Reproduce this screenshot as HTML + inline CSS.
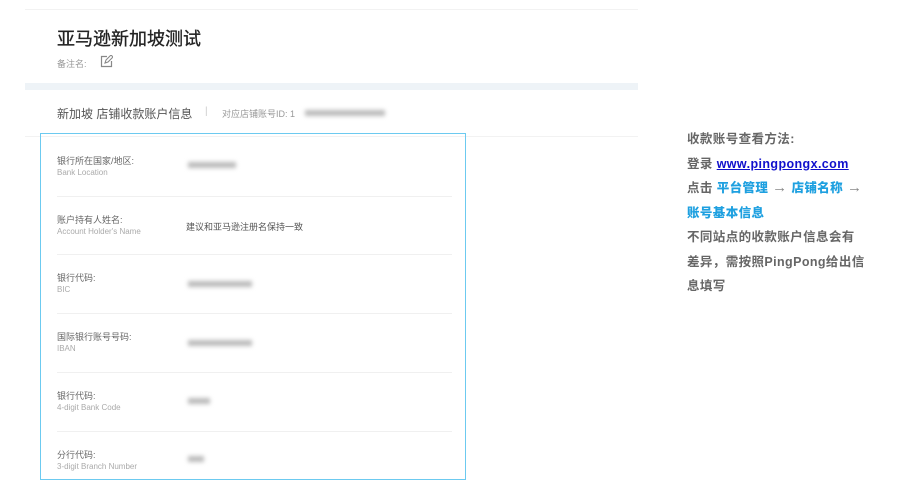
<!DOCTYPE html>
<html><head><meta charset="utf-8"><style>
body{margin:0;width:922px;height:489px;background:#fff;position:relative;overflow:hidden;font-family:"Liberation Sans","Noto Sans CJK SC",sans-serif;}
.a{position:absolute;}
.lab{position:absolute;left:57px;font-size:9px;color:#666;line-height:12px;}
.lab span{display:block;color:#aaa;font-size:8px;}
.bl{position:absolute;background:#bbb;filter:blur(2px);height:6px;}
.sep{position:absolute;left:57px;width:395px;height:1px;background:#f0f0f0;}
.r{position:absolute;left:687px;font-size:12.5px;color:#666;font-weight:bold;line-height:24.5px;letter-spacing:0.4px;}
.r b{color:#1ea0e0;}
.r i{font-style:normal;font-size:15px;color:#888;}
</style></head><body>
<div class="a" style="left:25px;top:9px;width:613px;height:1px;background:#f2f2f2"></div>
<div class="a" style="left:57px;top:25px;font-size:18px;color:#222;-webkit-text-stroke:0.3px #222">亚马逊新加坡测试</div>
<div class="a" style="left:57px;top:57px;font-size:9px;color:#999">备注名:</div>
<svg class="a" style="left:100px;top:55px" width="13" height="13" viewBox="0 0 13 13"><path d="M7 1.5H1.5v10h10V6" fill="none" stroke="#888" stroke-width="1.2"/><path d="M5 8l1-3 5-5 2 2-5 5z" fill="none" stroke="#888" stroke-width="1.1"/></svg>
<div class="a" style="left:25px;top:83px;width:613px;height:7px;background:#eef3f7"></div>
<div class="a" style="left:57px;top:105px;font-size:12px;color:#555">新加坡 店铺收款账户信息</div>
<div class="a" style="left:205px;top:106px;font-size:10px;color:#ccc">|</div>
<div class="a" style="left:222px;top:107px;font-size:9px;color:#999">对应店铺账号ID: 1</div>
<div class="bl" style="left:305px;top:110px;width:80px"></div>
<div class="a" style="left:25px;top:136px;width:613px;height:1px;background:#f2f2f2"></div>
<div class="a" style="left:40px;top:133px;width:424px;height:345px;border:1px solid #6ccaf0"></div>
<div class="lab" style="top:155px">银行所在国家/地区:<span>Bank Location</span></div>
<div class="bl" style="left:188px;top:162px;width:48px"></div>
<div class="sep" style="top:196px"></div>
<div class="lab" style="top:214px">账户持有人姓名:<span>Account Holder's Name</span></div>
<div class="a" style="left:186px;top:220px;font-size:9px;color:#555">建议和亚马逊注册名保持一致</div>
<div class="sep" style="top:254px"></div>
<div class="lab" style="top:272px">银行代码:<span>BIC</span></div>
<div class="bl" style="left:188px;top:281px;width:64px"></div>
<div class="sep" style="top:313px"></div>
<div class="lab" style="top:331px">国际银行账号号码:<span>IBAN</span></div>
<div class="bl" style="left:188px;top:340px;width:64px"></div>
<div class="sep" style="top:372px"></div>
<div class="lab" style="top:390px">银行代码:<span>4-digit Bank Code</span></div>
<div class="bl" style="left:188px;top:398px;width:22px"></div>
<div class="sep" style="top:431px"></div>
<div class="lab" style="top:449px">分行代码:<span>3-digit Branch Number</span></div>
<div class="bl" style="left:188px;top:456px;width:16px"></div>
<div class="r" style="top:127px">收款账号查看方法:<br>登录 <a style="color:#1010cc;text-decoration:underline">www.pingpongx.com</a><br>点击 <b>平台管理</b> <i>→</i> <b>店铺名称</b> <i>→</i><br><b>账号基本信息</b><br>不同站点的收款账户信息会有<br>差异，需按照PingPong给出信<br>息填写</div>
</body></html>
